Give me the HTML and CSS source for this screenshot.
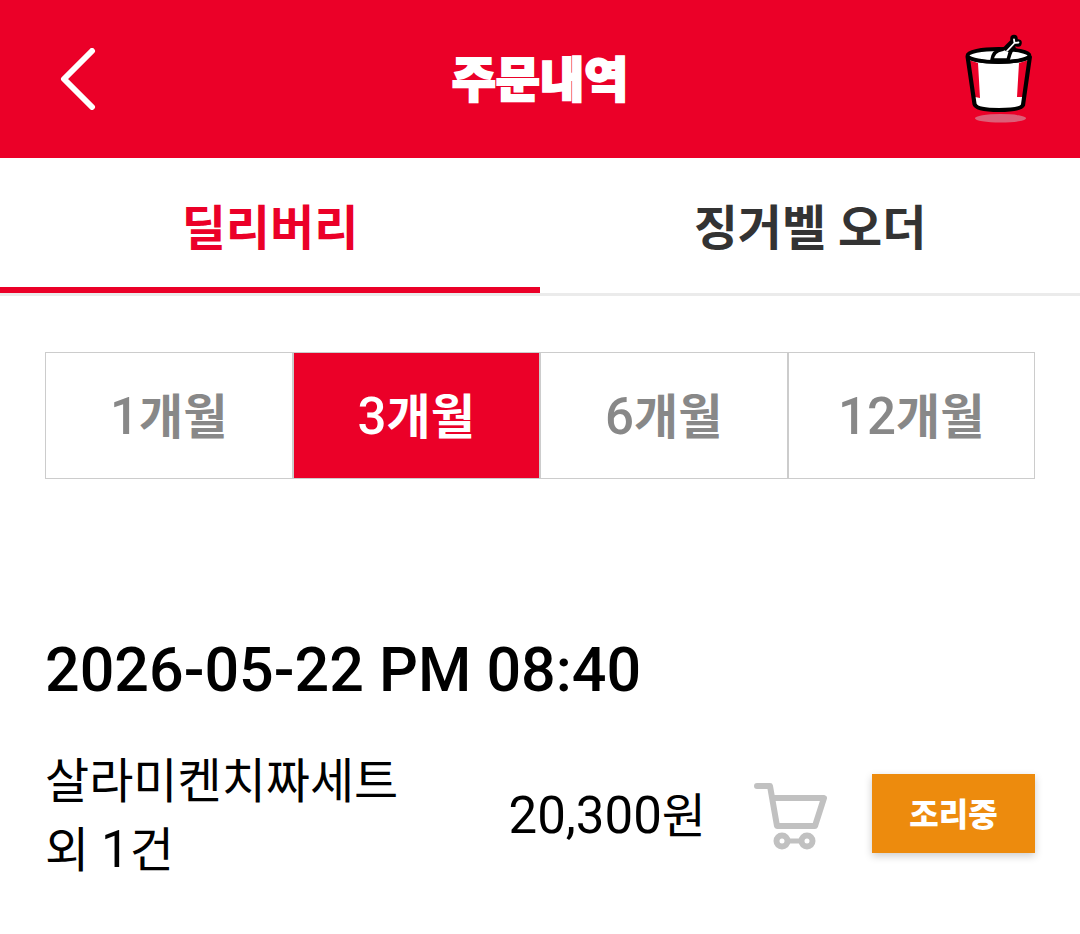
FILE: index.html
```html
<!DOCTYPE html>
<html lang="ko">
<head>
  <meta charset="UTF-8">
  <meta name="viewport" content="width=device-width, initial-scale=1.0">
  <title>주문내역</title>
  <link rel="stylesheet" href="styles.css">
</head>

<body>
  <header class="header">
    <button type="button" class="icon-btn back" aria-label="뒤로">
      <svg viewBox="0 0 36 62" width="36" height="62">
        <path d="M32 3 L4 31 L32 59" fill="none" stroke="#fff" stroke-width="6" stroke-linecap="round" stroke-linejoin="round"/>
      </svg>
    </button>
    <h1 class="title">주문내역</h1>
    <a href="#" class="icon-btn bucket" aria-label="장바구니">
      <svg viewBox="25 14 68 90" width="68" height="90">
        <ellipse cx="60.5" cy="98.3" rx="25.6" ry="4.3" fill="#dc5f78"/>
        <path d="M27.5 35 L34.5 84 Q36 90 59 90 Q81 90 83 85 L90 35 Z" fill="#fff"/>
        <path d="M29 40 L38 43 L40 78 L35 77 Z M79 43 L88 40 L83 77 L77 77 Z" fill="#eb0028"/>
        <ellipse cx="58.5" cy="35.5" rx="31" ry="6.5" fill="#fff" stroke="#000" stroke-width="3.8"/>
        <path d="M52 40 Q53 31 62 29.500 Q67 28 71 25 L74 28 Q70 31 69.500 35 L68 40 Z" fill="#fff" stroke="#000" stroke-width="3.6" stroke-linejoin="round"/>
        <path d="M68 28 L74 22 M74 20 V18.500 M75 22.500 L78 23" fill="none" stroke="#000" stroke-width="7.5" stroke-linecap="round"/>
        <path d="M67 31 L74.500 23 M74 19.500 L74.500 23 L78.500 22.500" fill="none" stroke="#fff" stroke-width="1.800" stroke-linecap="round"/>
        <path d="M27.500 36 L34.500 84 Q36 90 59 90 Q81 90 83 85 L90 36" fill="none" stroke="#000" stroke-width="4.2" stroke-linejoin="round"/>
        <path d="M28 37 Q34 42 59 42 Q83 42 89 37" fill="none" stroke="#000" stroke-width="3.5"/>
      </svg>
    </a>
  </header>

  <nav class="tabs">
    <a href="#" class="tab active">딜리버리</a>
    <a href="#" class="tab">징거벨 오더</a>
  </nav>

  <main class="content">
    <div class="period">
      <button type="button" class="period-btn"><span class="num">1</span>개월</button>
      <button type="button" class="period-btn active"><span class="num">3</span>개월</button>
      <button type="button" class="period-btn"><span class="num">6</span>개월</button>
      <button type="button" class="period-btn"><span class="num">12</span>개월</button>
    </div>

    <section class="order">
      <h2 class="order-date">2026-05-22 PM 08:40</h2>
      <div class="order-row">
        <p class="order-name">살라미켄치짜세트<br>외 <span class="num">1</span>건</p>
        <p class="order-price"><span class="num">20,300</span>원</p>
        <button type="button" class="icon-btn cart" aria-label="카트 담기">
          <svg viewBox="0 0 74 67" width="74" height="67">
            <path d="M3 3 H16 L23 43 H61 L70 15 H20" fill="none" stroke="#c1c1c1" stroke-width="6" stroke-linecap="round" stroke-linejoin="round"/>
            <path d="M28 58 H54" stroke="#c1c1c1" stroke-width="5"/>
            <circle cx="28" cy="58" r="5.5" fill="#fff" stroke="#c1c1c1" stroke-width="6"/>
            <circle cx="53" cy="58" r="5.5" fill="#fff" stroke="#c1c1c1" stroke-width="6"/>
          </svg>
        </button>
        <button type="button" class="status">조리중</button>
      </div>
    </section>
  </main>
</body>
</html>
```

FILE: styles.css
```css
* {
  box-sizing: border-box;
}

body {
  margin: 0;
  background-color: #fff;
  color: #000;
  font-family: Roboto, 'Noto Sans CJK KR', sans-serif;
  font-size: 48px;
}

a {
  text-decoration: none;
}

button {
  font-family: inherit;
  cursor: pointer;
}

svg {
  display: block;
}

.num {
  font-size: 51px;
}

.icon-btn {
  padding: 0;
  border: none;
  background: none;
}

/* 상단 헤더 */
.header {
  display: grid;
  grid-template-columns: 1fr auto 1fr;
  align-items: center;
  height: 158px;
  padding: 0 47px;
  background-color: #eb0028;
}

.back {
  justify-self: start;
  padding-left: 13px;
}

.bucket {
  justify-self: end;
}

.title {
  margin: 0;
  padding-top: 4px;
  color: #fff;
  font-size: 48px;
  font-weight: 900;
  line-height: 72px;
  -webkit-text-stroke: 2px #fff;
}

/* 탭 */
.tabs {
  display: flex;
  height: 138px;
  border-bottom: 3px solid #ebebeb;
}

.tab {
  flex: 1;
  padding-top: 3px;
  border-bottom: 6px solid transparent;
  color: #333;
  font-weight: bold;
  line-height: 136px;
  text-align: center;
}

.tab.active {
  border-bottom-color: #eb0028;
  color: #eb0028;
}

.content {
  padding: 56px 45px;
}

/* 조회 기간 */
.period {
  display: flex;
  border: 1px solid #ccc;
}

.period-btn {
  flex: 1;
  height: 125px;
  padding: 0 0 6px;
  border: none;
  border-left: 2px solid #ccc;
  background-color: #fff;
  color: #888;
  font-size: 48px;
  font-weight: bold;
}

.period-btn:first-child {
  border-left: none;
}

.period-btn .num {
  font-weight: 500;
}

.period-btn.active {
  background-color: #eb0028;
  color: #fff;
}

/* 주문 */
.order {
  padding-top: 153px;
}

.order-date {
  margin: 0;
  font-size: 61px;
  font-weight: 500;
  line-height: 76px;
}

.order-row {
  display: flex;
  align-items: center;
  margin-top: 34px;
}

.order-row p {
  margin: 0;
  padding-top: 6px;
  line-height: 68px;
}

.order-name {
  flex: 1;
}

.cart {
  margin: 0 44px 0 48px;
  padding-top: 6px;
}

.status {
  width: 163px;
  height: 79px;
  padding: 0 0 4px;
  border: none;
  background-color: #ed8b0d;
  box-shadow: 0 3px 8px rgba(0, 0, 0, 0.2);
  color: #fff;
  font-size: 32px;
  font-weight: 900;
}
```
